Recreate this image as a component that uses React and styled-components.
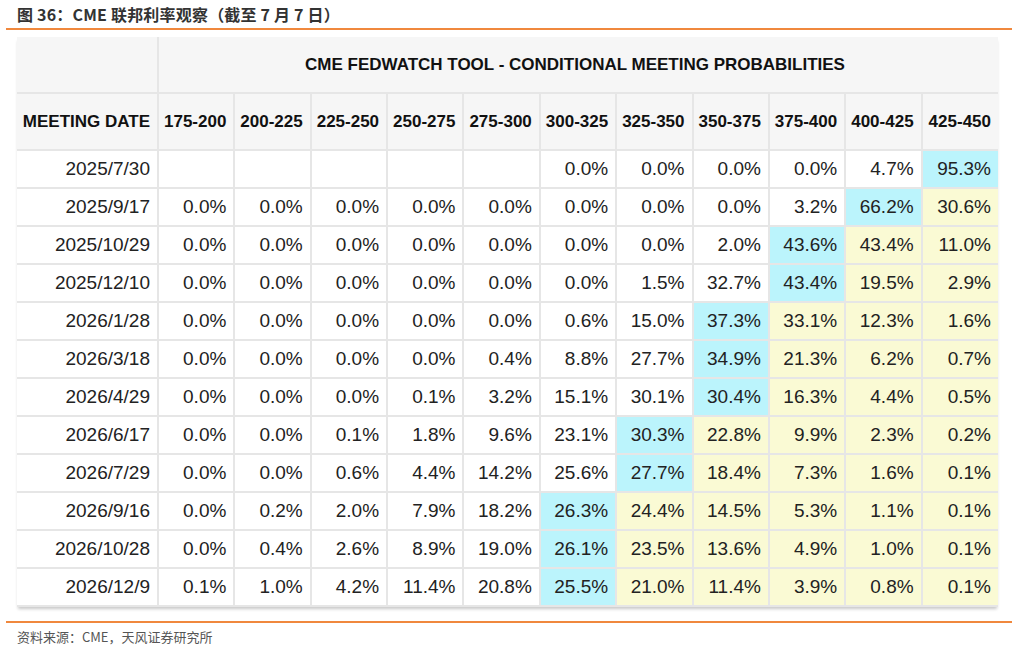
import React from "react";
import styled, {createGlobalStyle} from "styled-components";

const GlobalStyle = createGlobalStyle`
  html, body {
    margin: 0;
    padding: 0;
    background: #ffffff;
  }
`;

const Page = styled.div`
  width: 1017px;
  height: 651px;
  display: flex;
  flex-direction: column;
  font-family: "Liberation Sans", Arial, sans-serif;
`;

const Caption = styled.div`
  height: 28px;
  padding-left: 17px;
  display: flex;
  align-items: center;
  font-family: "Noto Sans CJK SC", sans-serif;
  font-weight: 700;
  font-size: 16px;
  color: #333333;
  letter-spacing: 0.2px;
`;

const Rule = styled.div`
  height: 2px;
  margin: 0 5px 0 6px;
  background: #f0883d;
`;

const TableWrap = styled.div`
  margin: 7px 0 0 17px;
  width: 981px;
  box-shadow: 0 3px 3px -1px rgba(0, 0, 0, 0.22);
`;

const Table = styled.table`
  width: 981px;
  border-collapse: collapse;
  table-layout: fixed;
`;

const HeadCell = styled.th`
  background: #f6f6f6;
  color: #111111;
  font-size: 17px;
  font-weight: 700;
  text-align: ${p => (p.$center ? "center" : "right")};
  padding: 0 7px 0 0;
  height: 55px;
  border: 2px solid #e6e6e6;
  border-top: none;
  white-space: nowrap;
  &:first-child { border-left: none; }
  &:last-child { border-right: none; }
`;

const Row = styled.tr`
  height: 38px;
`;

const Cell = styled.td`
  background: ${p => p.$tone === "cyan" ? "#bbf4fc" : p.$tone === "yellow" ? "#fafad4" : "#ffffff"};
  color: #222222;
  font-size: 19px;
  text-align: right;
  padding: 0 7px 0 0;
  border: 2px solid #e6e6e6;
  white-space: nowrap;
  &:first-child { border-left: none; }
  &:last-child { border-right: none; }
`;

const Source = styled.div`
  margin-top: 14px;
`;

const SourceText = styled.div`
  padding: 4px 0 0 17px;
  font-family: "Noto Sans CJK SC", sans-serif;
  font-size: 13px;
  color: #555555;
`;

const ranges = [
    "175-200", "200-225", "225-250", "250-275", "275-300", "300-325",
    "325-350", "350-375", "375-400", "400-425", "425-450",
];

const rows = [
    ["2025/7/30", [null, null, null, null, null, 0.0, 0.0, 0.0, 0.0, 4.7, 95.3]],
    ["2025/9/17", [0.0, 0.0, 0.0, 0.0, 0.0, 0.0, 0.0, 0.0, 3.2, 66.2, 30.6]],
    ["2025/10/29", [0.0, 0.0, 0.0, 0.0, 0.0, 0.0, 0.0, 2.0, 43.6, 43.4, 11.0]],
    ["2025/12/10", [0.0, 0.0, 0.0, 0.0, 0.0, 0.0, 1.5, 32.7, 43.4, 19.5, 2.9]],
    ["2026/1/28", [0.0, 0.0, 0.0, 0.0, 0.0, 0.6, 15.0, 37.3, 33.1, 12.3, 1.6]],
    ["2026/3/18", [0.0, 0.0, 0.0, 0.0, 0.4, 8.8, 27.7, 34.9, 21.3, 6.2, 0.7]],
    ["2026/4/29", [0.0, 0.0, 0.0, 0.1, 3.2, 15.1, 30.1, 30.4, 16.3, 4.4, 0.5]],
    ["2026/6/17", [0.0, 0.0, 0.1, 1.8, 9.6, 23.1, 30.3, 22.8, 9.9, 2.3, 0.2]],
    ["2026/7/29", [0.0, 0.0, 0.6, 4.4, 14.2, 25.6, 27.7, 18.4, 7.3, 1.6, 0.1]],
    ["2026/9/16", [0.0, 0.2, 2.0, 7.9, 18.2, 26.3, 24.4, 14.5, 5.3, 1.1, 0.1]],
    ["2026/10/28", [0.0, 0.4, 2.6, 8.9, 19.0, 26.1, 23.5, 13.6, 4.9, 1.0, 0.1]],
    ["2026/12/9", [0.1, 1.0, 4.2, 11.4, 20.8, 25.5, 21.0, 11.4, 3.9, 0.8, 0.1]],
];

// most likely range is cyan, everything above it up to the current range is yellow
const toneFor = (values, i) => {
    let top = 0;
    values.forEach((v, j) => {
        if (v !== null && v > values[top]) top = j;
    });
    if (i === top) return "cyan";
    if (i > top) return "yellow";
    return "white";
};

export default function App() {
    return (
        <Page>
            <GlobalStyle/>
            <Caption>图 36：CME 联邦利率观察（截至 7 月 7 日）</Caption>
            <Rule/>
            <TableWrap>
                <Table>
                    <colgroup>
                        <col style={{width: 141}}/>
                        {ranges.map(r => <col key={r}/>)}
                    </colgroup>
                    <thead>
                    <tr>
                        <HeadCell/>
                        <HeadCell colSpan={11} $center>
                            CME FEDWATCH TOOL - CONDITIONAL MEETING PROBABILITIES
                        </HeadCell>
                    </tr>
                    <tr>
                        <HeadCell>MEETING DATE</HeadCell>
                        {ranges.map(r => <HeadCell key={r}>{r}</HeadCell>)}
                    </tr>
                    </thead>
                    <tbody>
                    {rows.map(([date, values]) => (
                        <Row key={date}>
                            <Cell>{date}</Cell>
                            {values.map((v, i) => (
                                <Cell key={i} $tone={v === null ? "white" : toneFor(values, i)}>
                                    {v === null ? "" : `${v.toFixed(1)}%`}
                                </Cell>
                            ))}
                        </Row>
                    ))}
                    </tbody>
                </Table>
            </TableWrap>
            <Source>
                <Rule/>
                <SourceText>资料来源：CME，天风证券研究所</SourceText>
            </Source>
        </Page>
    );
}
